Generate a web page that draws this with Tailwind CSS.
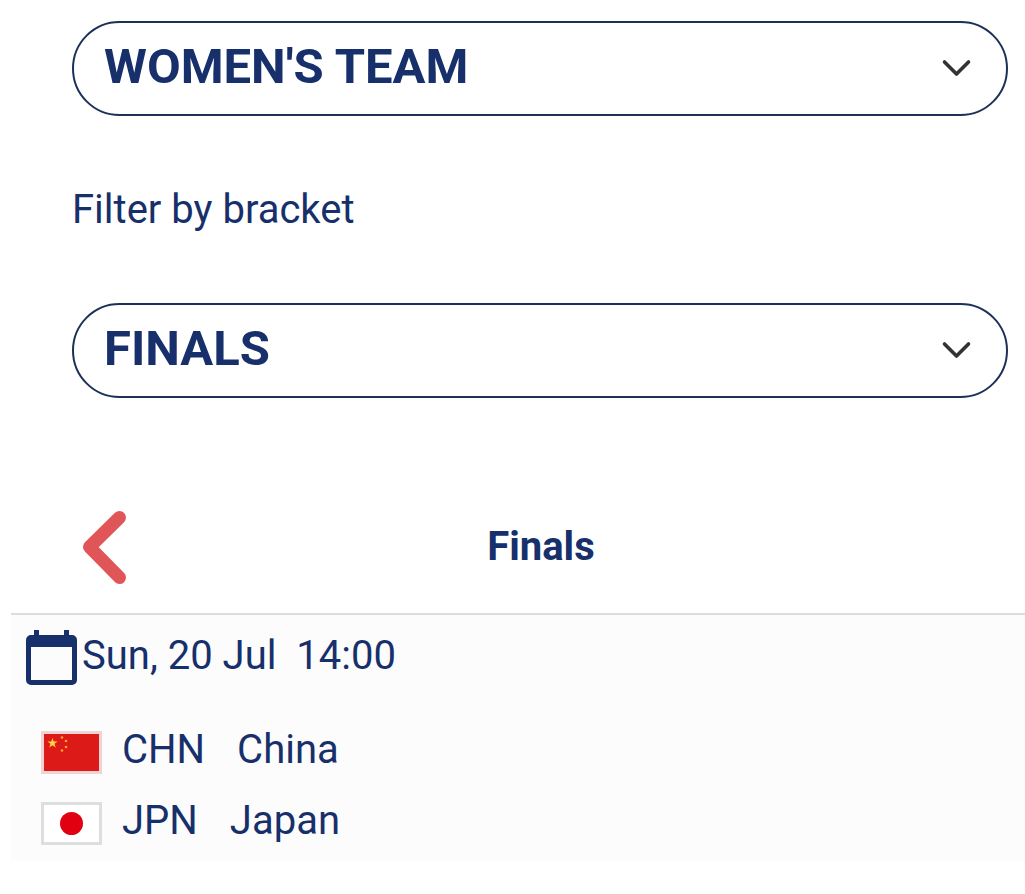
<!DOCTYPE html>
<html lang="en">
<head>
    <meta charset="UTF-8">
    <title>Team Schedule</title>
    <meta name="viewport" content="width=device-width, initial-scale=1.0">
    <script src="https://cdn.jsdelivr.net/npm/@tailwindcss/browser@4"></script>
</head>
<body class="bg-white font-[Roboto,sans-serif] text-[40px] leading-[48px] text-[#17306b]">

<main class="pt-[21px]">
    <!-- Filters -->
    <form class="pl-[72px] pr-[17px]">
        <div class="relative">
            <select id="event" aria-label="Event" class="block w-full h-[95px] appearance-none rounded-full border-2 border-[#1c3158] bg-white pl-[30px] pr-20 pb-1 text-[49px] leading-[60px] font-bold">
                <option>WOMEN'S TEAM</option>
                <option>WOMEN'S SINGLES</option>
            </select>
            <svg class="pointer-events-none absolute right-9 top-9 h-6 w-8" viewBox="0 0 32 24" fill="none" stroke="#333" stroke-width="3.600" stroke-linecap="round" stroke-linejoin="round">
                <path d="M4.500 5 16.500 17 28.500 5"/>
            </svg>
        </div>

        <label for="bracket" class="block pt-[70px] pb-[69px]">Filter by bracket</label>

        <div class="relative">
            <select id="bracket" class="block w-full h-[95px] appearance-none rounded-full border-2 border-[#1c3158] bg-white pl-[30px] pr-20 pb-1 text-[49px] leading-[60px] font-bold">
                <option>FINALS</option>
                <option>SEMIFINALS</option>
            </select>
            <svg class="pointer-events-none absolute right-9 top-9 h-6 w-8" viewBox="0 0 32 24" fill="none" stroke="#333" stroke-width="3.600" stroke-linecap="round" stroke-linejoin="round">
                <path d="M4.500 5 16.500 17 28.500 5"/>
            </svg>
        </div>
    </form>

    <!-- Round header -->
    <div class="mt-[111px] grid grid-cols-[1fr_auto_1fr] items-center pl-[82px] pr-[25px] pb-7">
        <button type="button" aria-label="Previous round" class="h-[76px] w-12">
            <svg class="h-full w-full" viewBox="0 0 48 76" fill="none" stroke="#e05658" stroke-width="13" stroke-linecap="round" stroke-linejoin="round">
                <path d="M37.500 8.500 7.500 38 37.500 68.500"/>
            </svg>
        </button>
        <h2 class="font-bold">Finals</h2>
    </div>

    <!-- Match -->
    <section class="ml-[11px] border-t-2 border-[#dcdcde] bg-[#fcfcfd] pt-3 pb-0.5">
        <div class="flex items-start gap-1 pl-[15px]">
            <svg class="h-[60px] w-[52px]" viewBox="0 0 52 60">
                <path fill="#17306b" fill-rule="evenodd" d="M8 3h5v5h25V3h5v5h3a5 5 0 0 1 5 5v40a5 5 0 0 1-5 5H5a5 5 0 0 1-5-5V13a5 5 0 0 1 5-5h3zM5 20v33h41V20z"/>
            </svg>
            <time datetime="14:00" class="whitespace-pre pt-[5px]">Sun, 20 Jul  14:00</time>
        </div>
        <ul class="mt-[30px] pl-[30px]">
            <li class="flex items-center h-[71px]">
                <svg class="h-[43px] w-[61px]" viewBox="0 0 61 43">
                    <path fill="#f0d4d5" d="M0 0h61v43H0z"/>
                    <path fill="#dc1a17" d="M3 3h55v37H3z"/>
                    <path fill="#ffd043" d="m11.500 7 1.200 3.500h4l-3.200 2.300 1.200 3.700-3.200-2.200-3.200 2.200 1.200-3.700-3.200-2.300h4z"/>
                    <g fill="#f5a72c">
                        <circle cx="21" cy="6.500" r="1.300"/>
                        <circle cx="25" cy="10" r="1.300"/>
                        <circle cx="25" cy="16" r="1.300"/>
                        <circle cx="21" cy="19.500" r="1.300"/>
                    </g>
                </svg>
                <span class="ml-5 pb-1.5">CHN</span>
                <span class="ml-8 pb-1.5">China</span>
            </li>
            <li class="flex items-center h-[71px]">
                <svg class="h-[43px] w-[61px]" viewBox="0 0 61 43">
                    <path fill="#dcdfdf" d="M0 0h61v43H0z"/>
                    <path fill="#fff" d="M3 3h55v37H3z"/>
                    <circle fill="#e1000f" cx="30.500" cy="21.500" r="11.500"/>
                </svg>
                <span class="ml-5 pb-1.5">JPN</span>
                <span class="ml-8 pb-1.5">Japan</span>
            </li>
        </ul>
    </section>
</main>

</body>
</html>
